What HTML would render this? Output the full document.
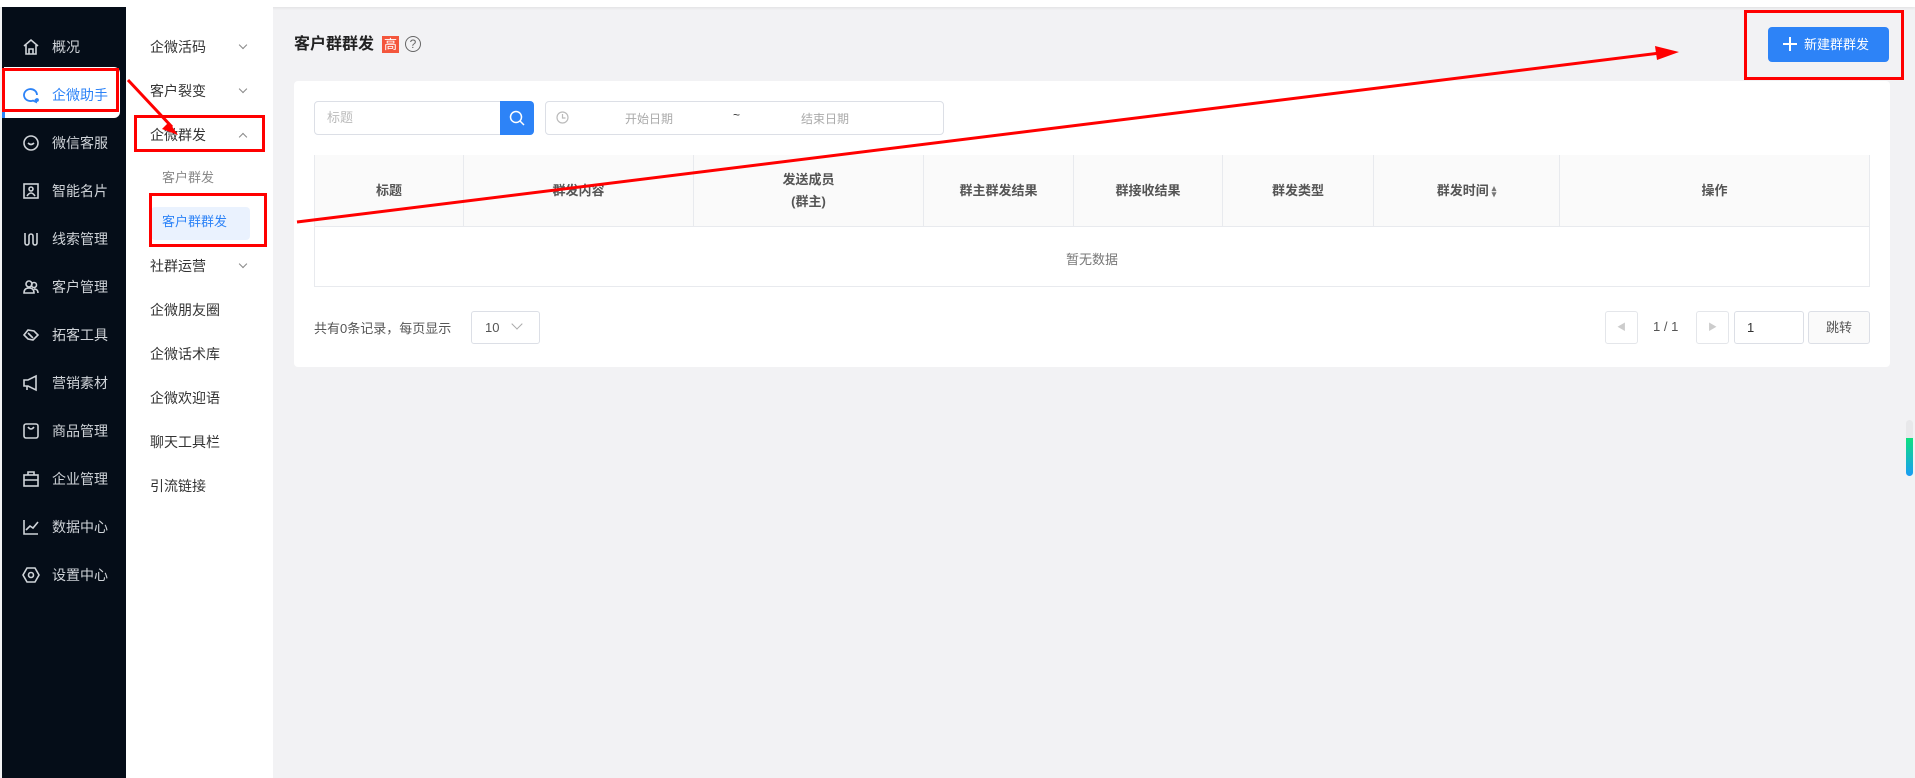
<!DOCTYPE html>
<html><head><meta charset="utf-8"><style>
*{margin:0;padding:0;box-sizing:border-box}
body{width:1915px;height:778px;overflow:hidden;background:#f2f2f4;font-family:"Liberation Sans","Noto Sans CJK SC",sans-serif;position:relative;color:#333}
.abs{position:absolute}
.top{left:0;top:0;width:1915px;height:7px;background:#fff;box-shadow:0 1px 3px rgba(0,0,0,.08)}
.side{left:2px;top:7px;width:124px;height:771px;background:#050d18}
.sub{left:126px;top:7px;width:147px;height:771px;background:#fff}
.mi{position:absolute;left:52px;font-size:14px;color:#cfd3d8;line-height:20px}
.ic{position:absolute;left:22px;width:18px;height:18px}
.si{position:absolute;left:150px;font-size:14px;color:#333;line-height:20px}
.chev{position:absolute;left:240px;width:6px;height:6px;border-right:1px solid #888;border-bottom:1px solid #888;transform:rotate(45deg)}
.card{left:294px;top:81px;width:1596px;height:286px;background:#fff;border-radius:4px}
.th{position:absolute;top:155px;height:71px;background:#fafafa;border-right:1px solid #e8eaee;font-size:13px;font-weight:bold;color:#555;display:flex;align-items:center;justify-content:center;text-align:center;line-height:22px}
.rb{position:absolute;border:3px solid #f00}
</style></head><body>
<div class="abs top"></div>
<div class="abs side"></div>
<div class="abs sub"></div>
<!-- active item -->
<div class="abs" style="left:4px;top:67px;width:116px;height:51px;background:#fff;border-radius:0 6px 6px 0"></div>
<div class="abs" style="left:2px;top:108px;width:3px;height:10px;background:#2d83f7"></div>
<!-- sidebar icons -->
<svg class="ic" style="top:38px" viewBox="0 0 18 18" fill="none" stroke="#cfd3d8" stroke-width="1.6"><path d="M2 8L9 2l7 6M4 7v9h10V7M7 16v-5h4v5"/></svg>
<svg class="ic" style="top:86px" viewBox="0 0 18 18" fill="none" stroke="#2d83f7" stroke-width="1.8"><path d="M15 9a6.5 6 0 1 0-4 5.6L14 16l-.5-3"/><circle cx="15" cy="14" r="1" fill="#2d83f7"/></svg>
<svg class="ic" style="top:134px" viewBox="0 0 18 18" fill="none" stroke="#cfd3d8" stroke-width="1.6"><circle cx="9" cy="9" r="7"/><path d="M6 9q3 3 6 0"/></svg>
<svg class="ic" style="top:182px" viewBox="0 0 18 18" fill="none" stroke="#cfd3d8" stroke-width="1.6"><rect x="2" y="2" width="14" height="14"/><circle cx="9" cy="7" r="2"/><path d="M5 14q4-6 8 0"/></svg>
<svg class="ic" style="top:230px" viewBox="0 0 18 18" fill="none" stroke="#cfd3d8" stroke-width="1.6"><path d="M3 3v10a2 2 0 0 0 4 0V6a2 2 0 0 1 4 0v7a2 2 0 0 0 4 0V3"/></svg>
<svg class="ic" style="top:278px" viewBox="0 0 18 18" fill="none" stroke="#cfd3d8" stroke-width="1.6"><circle cx="7" cy="6" r="3"/><circle cx="12" cy="7" r="2.5"/><path d="M2 15q0-5 5-5t5 5zM12 11q4 0 4 4"/></svg>
<svg class="ic" style="top:326px" viewBox="0 0 18 18" fill="none" stroke="#cfd3d8" stroke-width="1.6"><path d="M2 9l4-5 6 1 4 4-5 5-5-1zM6 7l5 5"/></svg>
<svg class="ic" style="top:374px" viewBox="0 0 18 18" fill="none" stroke="#cfd3d8" stroke-width="1.6"><path d="M2 6h4l8-4v14l-8-4H2zM5 12v4"/></svg>
<svg class="ic" style="top:422px" viewBox="0 0 18 18" fill="none" stroke="#cfd3d8" stroke-width="1.6"><rect x="2" y="2" width="14" height="14" rx="2"/><path d="M6 5q3 4 6 0"/></svg>
<svg class="ic" style="top:470px" viewBox="0 0 18 18" fill="none" stroke="#cfd3d8" stroke-width="1.6"><rect x="2" y="5" width="14" height="11"/><path d="M6 5V2h6v3M2 10h14"/></svg>
<svg class="ic" style="top:518px" viewBox="0 0 18 18" fill="none" stroke="#cfd3d8" stroke-width="1.6"><path d="M2 2v14h14M4 12l4-4 3 2 5-6"/></svg>
<svg class="ic" style="top:566px" viewBox="0 0 18 18" fill="none" stroke="#cfd3d8" stroke-width="1.6"><path d="M5 2h8l4 7-4 7H5L1 9z"/><circle cx="9" cy="9" r="2.5"/></svg>
<div class="mi" style="top:37px">概况</div>
<div class="mi" style="top:85px;color:#2d83f7">企微助手</div>
<div class="mi" style="top:133px">微信客服</div>
<div class="mi" style="top:181px">智能名片</div>
<div class="mi" style="top:229px">线索管理</div>
<div class="mi" style="top:277px">客户管理</div>
<div class="mi" style="top:325px">拓客工具</div>
<div class="mi" style="top:373px">营销素材</div>
<div class="mi" style="top:421px">商品管理</div>
<div class="mi" style="top:469px">企业管理</div>
<div class="mi" style="top:517px">数据中心</div>
<div class="mi" style="top:565px">设置中心</div>
<!-- submenu -->
<div class="si" style="top:37px">企微活码</div><div class="chev" style="top:42px"></div>
<div class="si" style="top:81px">客户裂变</div><div class="chev" style="top:86px"></div>
<div class="si" style="top:125px">企微群发</div><div class="chev" style="top:134px;transform:rotate(225deg)"></div>
<div class="si" style="top:168px;left:162px;font-size:13px;color:#888">客户群发</div>
<div class="abs" style="left:151px;top:207px;width:99px;height:33px;background:#eaf2fe;border-radius:4px"></div>
<div class="si" style="top:212px;left:162px;font-size:13px;color:#2d83f7">客户群群发</div>
<div class="si" style="top:256px">社群运营</div><div class="chev" style="top:261px"></div>
<div class="si" style="top:300px">企微朋友圈</div>
<div class="si" style="top:344px">企微话术库</div>
<div class="si" style="top:388px">企微欢迎语</div>
<div class="si" style="top:432px">聊天工具栏</div>
<div class="si" style="top:476px">引流链接</div>
<!-- title -->
<div class="abs" style="left:294px;top:34px;font-size:16px;font-weight:bold;color:#222;line-height:22px">客户群群发</div>
<div class="abs" style="left:382px;top:36px;width:17px;height:17px;background:#f4563c;color:#fff;font-size:13px;line-height:17px;text-align:center">高</div>
<div class="abs" style="left:405px;top:36px;width:16px;height:16px;border:1.3px solid #666;border-radius:50%;font-size:12px;line-height:14px;text-align:center;color:#666">?</div>
<!-- button -->
<div class="abs" style="left:1768px;top:27px;width:121px;height:35px;background:#2d83f7;border-radius:4px;color:#fff;font-size:13px;line-height:35px;padding-left:36px">新建群群发</div>
<svg class="abs" style="left:1782px;top:36px" width="16" height="16"><path d="M8 1v14M1 8h14" stroke="#fff" stroke-width="2"/></svg>
<!-- card -->
<div class="abs card"></div>
<div class="abs" style="left:314px;top:101px;width:187px;height:34px;border:1px solid #dcdfe6;border-radius:4px 0 0 4px;font-size:13px;color:#bbb;line-height:32px;padding-left:12px">标题</div>
<div class="abs" style="left:500px;top:101px;width:34px;height:34px;background:#2d83f7;border-radius:0 4px 4px 0"></div>
<svg class="abs" style="left:509px;top:110px" width="16" height="16" fill="none" stroke="#fff" stroke-width="1.5"><circle cx="7" cy="7" r="5.5"/><path d="M11 11l4 4"/></svg>
<div class="abs" style="left:545px;top:101px;width:399px;height:34px;border:1px solid #dcdfe6;border-radius:4px"></div>
<svg class="abs" style="left:556px;top:111px" width="13" height="13" fill="none" stroke="#bbb" stroke-width="1.2"><circle cx="6.5" cy="6.5" r="5.5"/><path d="M6.5 3v4h3"/></svg>
<div class="abs" style="left:625px;top:110px;font-size:12px;color:#aaa">开始日期</div>
<div class="abs" style="left:733px;top:108px;font-size:12px;color:#333">~</div>
<div class="abs" style="left:801px;top:110px;font-size:12px;color:#aaa">结束日期</div>
<!-- table -->
<div class="abs" style="left:314px;top:155px;width:1556px;height:132px;border:1px solid #e8eaee"></div>
<div class="th" style="left:315px;width:149px">标题</div>
<div class="th" style="left:464px;width:230px">群发内容</div>
<div class="th" style="left:694px;width:230px">发送成员<br>(群主)</div>
<div class="th" style="left:924px;width:150px">群主群发结果</div>
<div class="th" style="left:1074px;width:149px">群接收结果</div>
<div class="th" style="left:1223px;width:151px">群发类型</div>
<div class="th" style="left:1374px;width:186px">群发时间 <span style="font-size:9px;color:#777;margin-left:3px;line-height:6px">▴<br>▾</span></div>
<div class="th" style="left:1560px;width:309px;border-right:none">操作</div>
<div class="abs" style="left:315px;top:226px;width:1554px;height:1px;background:#e8eaee"></div>
<div class="abs" style="left:314px;top:249px;width:1556px;text-align:center;font-size:13px;color:#777">暂无数据</div>
<!-- pagination -->
<div class="abs" style="left:314px;top:318px;font-size:13px;color:#555">共有0条记录，每页显示</div>
<div class="abs" style="left:471px;top:311px;width:69px;height:33px;border:1px solid #dcdfe6;border-radius:3px;font-size:13px;line-height:31px;padding-left:13px;color:#555">10</div>
<div class="abs" style="left:513px;top:320px;width:8px;height:8px;border-right:1px solid #aaa;border-bottom:1px solid #aaa;transform:rotate(45deg)"></div>
<div class="abs" style="left:1605px;top:311px;width:33px;height:33px;border:1px solid #e4e6ea;border-radius:3px;font-size:9px;color:#ccc;text-align:center;line-height:31px">◀</div>
<div class="abs" style="left:1653px;top:319px;font-size:13px;color:#555">1 / 1</div>
<div class="abs" style="left:1696px;top:311px;width:33px;height:33px;border:1px solid #e4e6ea;border-radius:3px;font-size:9px;color:#ccc;text-align:center;line-height:31px">▶</div>
<div class="abs" style="left:1734px;top:311px;width:70px;height:33px;border:1px solid #dcdfe6;border-radius:3px;font-size:13px;line-height:31px;padding-left:12px;color:#333">1</div>
<div class="abs" style="left:1808px;top:311px;width:62px;height:33px;border:1px solid #dcdfe6;border-radius:3px;font-size:13px;line-height:31px;text-align:center;color:#555;background:#fafafa">跳转</div>
<!-- scroll widget -->
<div class="abs" style="left:1906px;top:420px;width:7px;height:56px;border-radius:4px;background:#e8e8ea"></div>
<div class="abs" style="left:1906px;top:438px;width:7px;height:38px;border-radius:0 0 4px 4px;background:linear-gradient(#0de07f,#1a9cf5)"></div>
<!-- red annotations -->
<div class="rb" style="left:2px;top:68px;width:117px;height:44px"></div>
<div class="rb" style="left:134px;top:115px;width:131px;height:37px"></div>
<div class="rb" style="left:149px;top:193px;width:118px;height:54px"></div>
<div class="rb" style="left:1744px;top:10px;width:160px;height:70px"></div>
<svg class="abs" style="left:0;top:0" width="1915" height="778">
<path d="M128 80L172 127" stroke="#f00" stroke-width="3"/>
<path d="M178 135l-16-6 7-7z" fill="#f00"/>
<path d="M297 222L1660 53" stroke="#f00" stroke-width="3"/>
<path d="M1679 52l-24-6 2 14z" fill="#f00"/>
</svg>
</body></html>
